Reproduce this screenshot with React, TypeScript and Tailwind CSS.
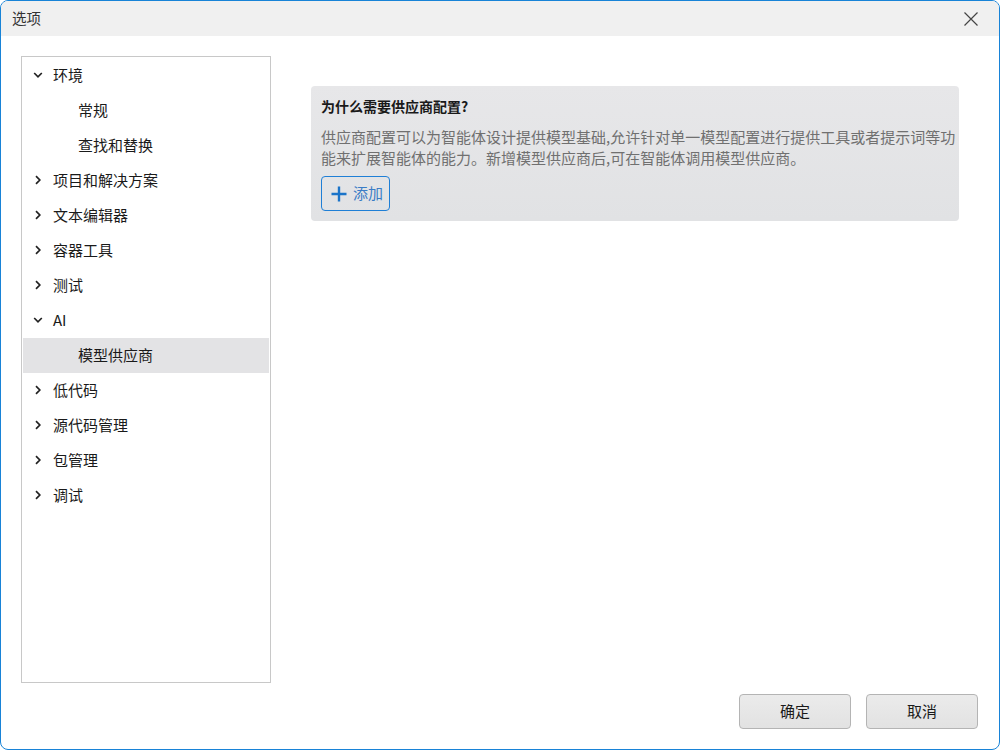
import React from "react";

const font = { fontFamily: '"Noto Sans CJK SC", "Noto Sans", sans-serif' };

function ChevronRight() {
  return (
    <svg width="10" height="10" viewBox="0 0 10 10" className="shrink-0">
      <path d="M3 1.2 L6.8 5 L3 8.8" fill="none" stroke="#222" strokeWidth="1.7" />
    </svg>
  );
}
function ChevronDown() {
  return (
    <svg width="10" height="10" viewBox="0 0 10 10" className="shrink-0">
      <path d="M1.2 3 L5 6.8 L8.8 3" fill="none" stroke="#222" strokeWidth="1.7" />
    </svg>
  );
}

type Item = { label: string; level: number; expanded?: boolean; selected?: boolean };

const items: Item[] = [
  { label: "环境", level: 0, expanded: true },
  { label: "常规", level: 1 },
  { label: "查找和替换", level: 1 },
  { label: "项目和解决方案", level: 0 },
  { label: "文本编辑器", level: 0 },
  { label: "容器工具", level: 0 },
  { label: "测试", level: 0 },
  { label: "AI", level: 0, expanded: true },
  { label: "模型供应商", level: 1, selected: true },
  { label: "低代码", level: 0 },
  { label: "源代码管理", level: 0 },
  { label: "包管理", level: 0 },
  { label: "调试", level: 0 },
];

export default function App() {
  return (
    <div
      className="w-[1000px] h-[750px] bg-white border border-[#1883d7] rounded-[8px] overflow-hidden flex flex-col text-[15px] text-[#1a1a1a]"
      style={font}
    >
      <div className="h-[35px] bg-[#f0f0f0] flex items-center justify-between pl-[11px] pr-[20px] shrink-0">
        <span className="text-[14.5px] text-[#333] leading-none">选项</span>
        <svg width="16" height="16" viewBox="0 0 16 16">
          <path d="M1.5 1.5 L14.5 14.5 M14.5 1.5 L1.5 14.5" stroke="#444" strokeWidth="1.2" fill="none" />
        </svg>
      </div>
      <div className="flex-1 flex flex-col pl-[20px] pr-[20px] pt-[20px]">
        <div className="flex">
          <div className="w-[250px] h-[627px] border border-[#c8c8c8] pt-[1px] px-[1px] shrink-0">
            {items.map((it) => (
              <div
                key={it.label}
                className={`h-[35px] pb-[2px] flex items-center leading-none ${it.selected ? "bg-[#e3e3e5]" : ""}`}
              >
                {it.level === 0 ? (
                  <div className="flex items-center pl-[10px]">
                    {it.expanded ? <ChevronDown /> : <ChevronRight />}
                    <span className="ml-[10px]">{it.label}</span>
                  </div>
                ) : (
                  <span className="pl-[55px]">{it.label}</span>
                )}
              </div>
            ))}
          </div>
          <div className="ml-[40px] mt-[30px] w-[648px] self-start">
            <div className="rounded-[4px] bg-gradient-to-b from-[#e7e7e9] to-[#e1e2e4] px-[10px] pt-[10px] pb-[10px]">
              <div className="font-bold text-[14px] leading-[20px] text-[#1a1a1a]">为什么需要供应商配置?</div>
              <div className="mt-[10px] leading-[21px] text-[#707070] whitespace-nowrap">
                供应商配置可以为智能体设计提供模型基础,允许针对单一模型配置进行提供工具或者提示词等功
                <br />
                能来扩展智能体的能力。新增模型供应商后,可在智能体调用模型供应商。
              </div>
              <button className="mt-[8px] h-[35px] w-[69px] border border-[#1f7fd6] rounded-[4px] flex items-center pl-[8px]">
                <svg width="18" height="18" viewBox="0 0 18 18">
                  <path d="M9 1.5 V16.5 M1.5 9 H16.5" stroke="#1b74c9" strokeWidth="2.4" fill="none" />
                </svg>
                <span className="ml-[5px] text-[#3a7cc6]">添加</span>
              </button>
            </div>
          </div>
        </div>
        <div className="flex justify-end gap-[15px] mt-[11px] pr-[1px]">
          <button className="w-[112px] h-[35px] border border-[#b4b4b4] rounded-[4px] bg-gradient-to-b from-[#ebebeb] to-[#e2e2e2] text-[#1a1a1a]">
            确定
          </button>
          <button className="w-[112px] h-[35px] border border-[#b4b4b4] rounded-[4px] bg-gradient-to-b from-[#ebebeb] to-[#e2e2e2] text-[#1a1a1a]">
            取消
          </button>
        </div>
      </div>
    </div>
  );
}
